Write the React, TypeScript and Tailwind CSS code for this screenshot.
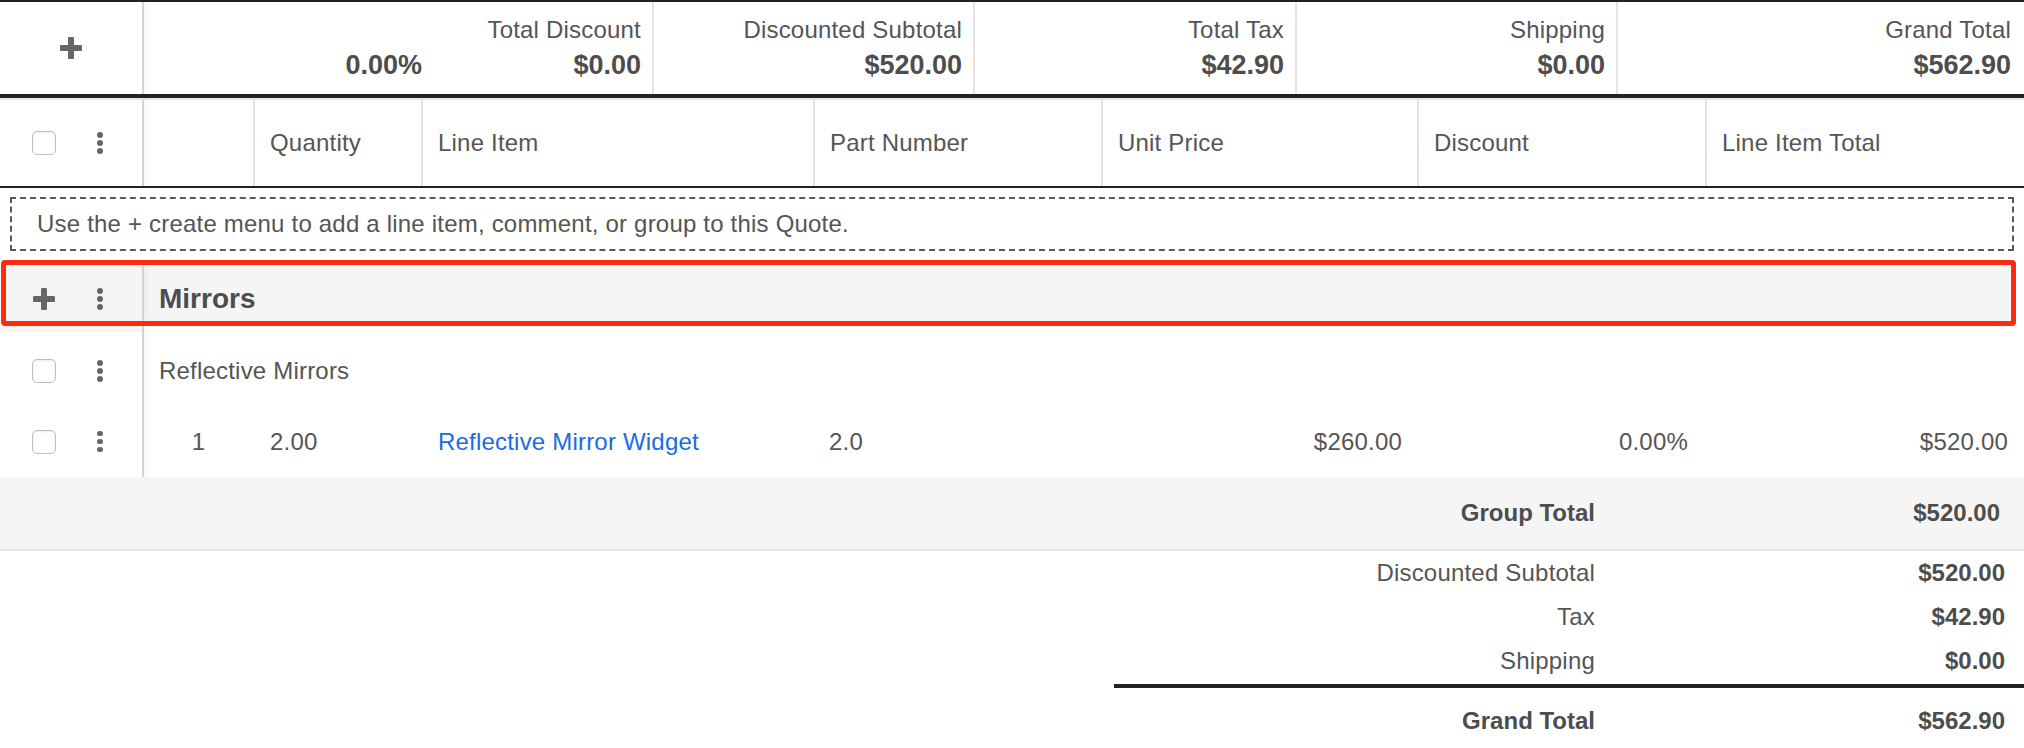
import React from "react";

const Plus = ({ size = 22 }: { size?: number }) => (
  <svg width={size} height={size} viewBox="0 0 22 22" className="block">
    <rect x="8" y="0" width="6" height="22" rx="1.2" fill="#666" />
    <rect x="0" y="8" width="22" height="6" rx="1.2" fill="#666" />
  </svg>
);

const Kebab = () => (
  <div className="flex flex-col items-center gap-[2.5px] w-[6px]">
    <span className="block w-[5.5px] h-[5.5px] rounded-full bg-[#666]" />
    <span className="block w-[5.5px] h-[5.5px] rounded-full bg-[#666]" />
    <span className="block w-[5.5px] h-[5.5px] rounded-full bg-[#666]" />
  </div>
);

const Checkbox = () => (
  <div className="w-[24px] h-[24px] rounded-[5px] border border-[#bdbdbd] bg-white shadow-[inset_0_1px_2px_rgba(0,0,0,0.08)]" />
);

const Gutter = () => (
  <div className="w-[2px] shrink-0 bg-[#d3d3d3] shadow-[3px_0_4px_rgba(0,0,0,0.07)]" />
);

const TopCell = ({
  label,
  value,
  className,
}: {
  label: string;
  value: string;
  className: string;
}) => (
  <div className={`flex flex-col items-end justify-center pr-[11px] gap-[5px] ${className}`}>
    <div className="h-[28px] leading-[28px] text-[24px] tracking-[0.2px] text-[#555]">{label}</div>
    <div className="h-[32px] leading-[32px] text-[27px] font-bold text-[#4d4d4d]">{value}</div>
  </div>
);

const HeadCol = ({ label, className }: { label: string; className: string }) => (
  <div className={`flex items-center pl-[15px] border-l-2 border-[#e3e3e3] text-[24px] tracking-[0.2px] text-[#555] ${className}`}>
    {label}
  </div>
);

export default function App() {
  return (
    <div className="w-[2024px] h-[748px] overflow-hidden bg-white font-['Liberation_Sans',Arial,sans-serif] text-[#555]">
      {/* Top summary row */}
      <div className="flex h-[100px] border-t-2 border-[#222]">
        <div className="flex flex-col w-full">
          <div className="flex h-[92px]">
            <div className="w-[142px] flex items-center justify-center">
              <Plus />
            </div>
            <Gutter />
            <div className="w-[290px] flex flex-col items-end justify-center pr-[12px] gap-[5px]">
              <div className="h-[28px]" />
              <div className="h-[32px] leading-[32px] text-[27px] font-bold text-[#4d4d4d]">0.00%</div>
            </div>
            <TopCell label="Total Discount" value="$0.00" className="w-[220px] border-r-2 border-[#e5e5e5]" />
            <TopCell label="Discounted Subtotal" value="$520.00" className="w-[321px] border-r-2 border-[#e5e5e5]" />
            <TopCell label="Total Tax" value="$42.90" className="w-[322px] border-r-2 border-[#e5e5e5]" />
            <TopCell label="Shipping" value="$0.00" className="w-[321px] border-r-2 border-[#e5e5e5]" />
            <TopCell label="Grand Total" value="$562.90" className="flex-1 pr-[13px]" />
          </div>
          <div className="h-[4px] bg-[#222]" />
          <div className="h-[2px] bg-[#e5e5e5]" />
        </div>
      </div>

      {/* Column header row */}
      <div className="flex h-[88px] border-b-2 border-[#222]">
        <div className="w-[142px] flex items-center pl-[32px]">
          <Checkbox />
          <div className="ml-[41px]">
            <Kebab />
          </div>
        </div>
        <Gutter />
        <div className="w-[109px]" />
        <HeadCol label="Quantity" className="w-[168px]" />
        <HeadCol label="Line Item" className="w-[392px]" />
        <HeadCol label="Part Number" className="w-[288px]" />
        <HeadCol label="Unit Price" className="w-[316px]" />
        <HeadCol label="Discount" className="w-[288px]" />
        <HeadCol label="Line Item Total" className="flex-1" />
      </div>

      {/* Empty hint row */}
      <div className="h-[72px] px-[10px] pt-[9px] pb-[9px]">
        <div className="h-[54px] border-2 border-dashed border-[#5a5a5a] flex items-center pl-[25px] text-[24px] tracking-[0.2px] text-[#555]">
          Use the + create menu to add a line item, comment, or group to this Quote.
        </div>
      </div>

      {/* Group row (highlighted) */}
      <div className="ml-[1px] w-[2015px] h-[66px] border-[5px] border-[#ff2a12] rounded-[4px] bg-[#f5f5f5] flex">
        <div className="w-[136px] flex items-center pl-[27px] pt-[12px]">
          <Plus />
          <div className="ml-[42px]">
            <Kebab />
          </div>
        </div>
        <Gutter />
        <div className="flex items-center pl-[15px] pt-[12px] text-[28px] font-bold text-[#4d4d4d]">Mirrors</div>
      </div>

      <div className="flex h-[6px]">
        <div className="w-[142px] bg-[#f5f5f5]" />
        <Gutter />
      </div>

      {/* Comment row */}
      <div className="flex h-[74px]">
        <div className="w-[142px] flex items-center pl-[32px] pt-[4px]">
          <Checkbox />
          <div className="ml-[41px]">
            <Kebab />
          </div>
        </div>
        <Gutter />
        <div className="flex items-center pl-[15px] pt-[4px] text-[24px] tracking-[0.2px] text-[#555]">Reflective Mirrors</div>
      </div>

      {/* Line item row */}
      <div className="flex h-[71px] text-[24px] tracking-[0.2px] text-[#555]">
        <div className="w-[142px] flex items-center pl-[32px]">
          <Checkbox />
          <div className="ml-[41px]">
            <Kebab />
          </div>
        </div>
        <Gutter />
        <div className="w-[109px] flex items-center justify-center">1</div>
        <div className="w-[168px] flex items-center pl-[17px]">2.00</div>
        <div className="w-[392px] flex items-center pl-[17px] text-[#176de6]">Reflective Mirror Widget</div>
        <div className="w-[288px] flex items-center pl-[16px]">2.0</div>
        <div className="w-[316px] flex items-center justify-end pr-[15px]">$260.00</div>
        <div className="w-[288px] flex items-center justify-end pr-[17px]">0.00%</div>
        <div className="flex-1 flex items-center justify-end pr-[16px]">$520.00</div>
      </div>

      {/* Group total */}
      <div className="h-[74px] bg-[#f5f5f5] border-b-2 border-[#e8e8e8] flex justify-end">
        <div className="w-[910px] grid grid-cols-[481px_1fr] items-center text-[24px] font-bold text-[#4d4d4d]">
          <div className="text-right">Group Total</div>
          <div className="text-right pr-[24px]">$520.00</div>
        </div>
      </div>

      {/* Summary */}
      <div className="flex justify-end">
        <div className="w-[910px] flex flex-col">
          <div className="grid grid-cols-[481px_1fr] text-[24px]">
            <div className="h-[44px] flex items-center justify-end tracking-[0.2px] text-[#555]">Discounted Subtotal</div>
            <div className="h-[44px] flex items-center justify-end pr-[19px] font-bold text-[#4d4d4d]">$520.00</div>
            <div className="h-[44px] flex items-center justify-end tracking-[0.2px] text-[#555]">Tax</div>
            <div className="h-[44px] flex items-center justify-end pr-[19px] font-bold text-[#4d4d4d]">$42.90</div>
            <div className="h-[44px] flex items-center justify-end tracking-[0.2px] text-[#555]">Shipping</div>
            <div className="h-[44px] flex items-center justify-end pr-[19px] font-bold text-[#4d4d4d]">$0.00</div>
          </div>
          <div className="mt-[1px] h-[4px] bg-[#222]" />
          <div className="grid grid-cols-[481px_1fr] text-[24px] font-bold text-[#4d4d4d]">
            <div className="h-[66px] flex items-center justify-end">Grand Total</div>
            <div className="h-[66px] flex items-center justify-end pr-[19px]">$562.90</div>
          </div>
        </div>
      </div>
    </div>
  );
}
